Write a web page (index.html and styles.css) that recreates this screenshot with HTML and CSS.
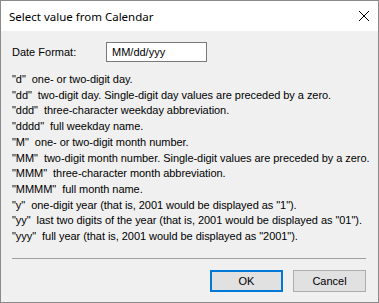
FILE: index.html
```html
<!DOCTYPE html>
<html lang="en">
<head>
  <meta charset="UTF-8">
  <meta name="viewport" content="width=device-width, initial-scale=1.0">
  <title>Select value from Calendar</title>
  <link rel="stylesheet" href="styles.css">
</head>
<body>
  <div class="dialog">
    <div class="title-bar">
      <span class="title">Select value from Calendar</span>
      <span class="close">
        <svg width="12" height="12" viewBox="0 0 12 12">
          <path d="M1 1 L11 11 M11 1 L1 11" stroke="#000" stroke-width="1" fill="none"/>
        </svg>
      </span>
    </div>
    <div class="dialog-body">
      <div class="format-row">
        <span class="format-label">Date Format:</span>
        <input class="format-input" type="text" value="MM/dd/yyy">
      </div>
      <!-- Format codes help -->
      <ul class="help">
        <li>"d"  one- or two-digit day.</li>
        <li>"dd"  two-digit day. Single-digit day values are preceded by a zero.</li>
        <li>"ddd"  three-character weekday abbreviation.</li>
        <li>"dddd"  full weekday name.</li>
        <li>"M"  one- or two-digit month number.</li>
        <li>"MM"  two-digit month number. Single-digit values are preceded by a zero.</li>
        <li>"MMM"  three-character month abbreviation.</li>
        <li>"MMMM"  full month name.</li>
        <li>"y"  one-digit year (that is, 2001 would be displayed as "1").</li>
        <li>"yy"  last two digits of the year (that is, 2001 would be displayed as "01").</li>
        <li>"yyy"  full year (that is, 2001 would be displayed as "2001").</li>
      </ul>
      <div class="separator"></div>
      <div class="buttons">
        <button class="btn btn-default">OK</button>
        <button class="btn">Cancel</button>
      </div>
    </div>
  </div>
</body>
</html>
```
FILE: styles.css
```css
body {
  margin: 0;
  background-color: #f0f0f0;
  font-family: "Liberation Sans", Arial, sans-serif;
}

.dialog {
  width: 377px;
  height: 301px;
  border: 1px solid #8a8a8a;
  background-color: #f0f0f0;
  display: flex;
  flex-direction: column;
}

.title-bar {
  height: 30px;
  background-color: #fff;
  display: flex;
  align-items: center;
  justify-content: space-between;
  padding: 0 8px 0 8px;
}

.title {
  font-family: "Noto Sans", sans-serif;
  font-size: 11.5px;
  color: #000;
  margin-top: 1px;
}

.close {
  display: flex;
}

.dialog-body {
  padding: 11px 12px 0 11px;
  font-size: 11px;
  color: #000;
}

.format-row {
  display: flex;
  align-items: center;
  height: 20px;
}

.format-label {
  width: 94px;
}

.format-input {
  width: 101px;
  height: 20px;
  box-sizing: border-box;
  border: 1px solid #7a7a7a;
  background-color: #fff;
  padding: 0 5px;
  margin: 0;
  font-family: "Liberation Sans", Arial, sans-serif;
  font-size: 11px;
  color: #000;
  outline: none;
}

.help {
  list-style: none;
  margin: 10px 0 0;
  padding: 0;
  line-height: 15.7px;
  letter-spacing: -0.05px;
}

.help li {
  white-space: pre;
}

.separator {
  height: 1px;
  background-color: #a0a0a0;
  margin-top: 13px;
}

.buttons {
  display: flex;
  justify-content: flex-end;
  gap: 10px;
  margin-top: 11px;
}

.btn {
  width: 73px;
  height: 22px;
  box-sizing: border-box;
  border: 1px solid #adadad;
  background-color: #e1e1e1;
  font-family: "Liberation Sans", Arial, sans-serif;
  font-size: 11px;
  color: #000;
  padding: 0;
}

.btn-default {
  border: 2px solid #0078d7;
}
```
